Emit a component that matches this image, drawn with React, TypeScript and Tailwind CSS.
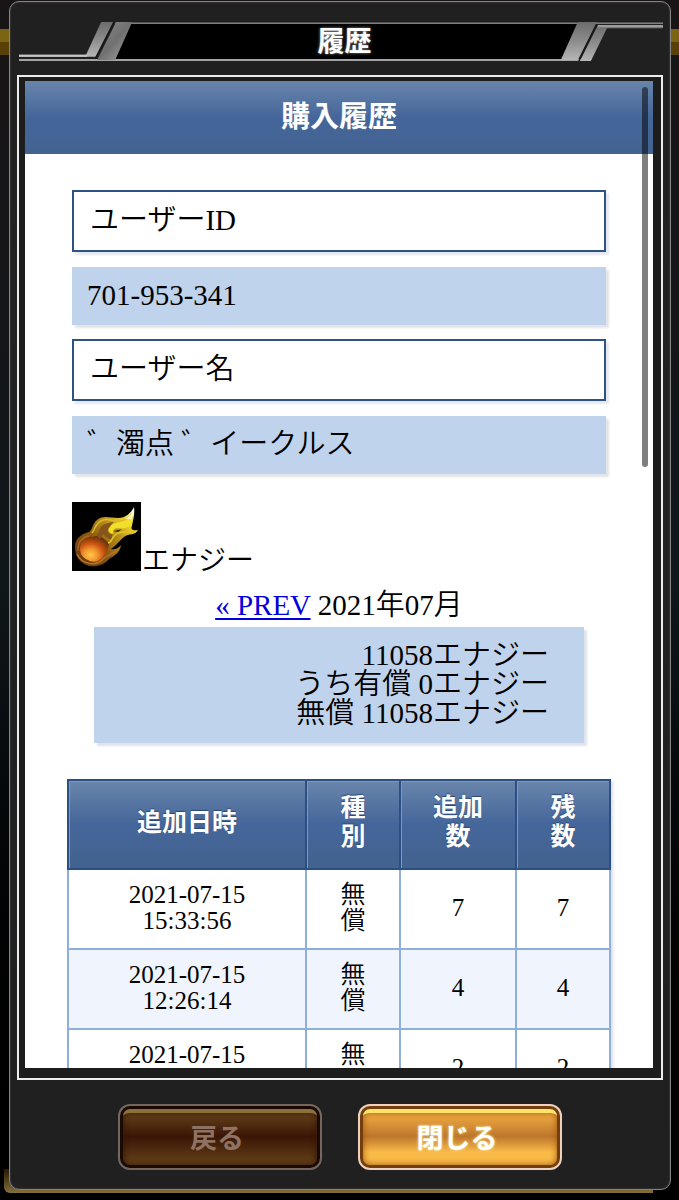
import React from "react";

type Row = { date: string; time: string; kind: string; added: number; left: number };

const rows: Row[] = [
  { date: "2021-07-15", time: "15:33:56", kind: "無償", added: 7, left: 7 },
  { date: "2021-07-15", time: "12:26:14", kind: "無償", added: 4, left: 4 },
  { date: "2021-07-15", time: "\u00a0", kind: "無償", added: 2, left: 2 },
];

const fields = [
  { label: "ユーザーID", value: "701-953-341" },
  { label: "ユーザー名", value: "゛濁点 ゛イークルス" },
];

function TitleBar() {
  return (
    <header className="mr-[7px] ml-[9px] mt-5 grid h-[39px]">
      <svg
        className="col-start-1 row-start-1 h-full w-full"
        viewBox="0 0 643 39"
        preserveAspectRatio="none"
        aria-hidden="true"
      >
        <defs>
          <linearGradient id="metal" x1="0" y1="0" x2="0" y2="1">
            <stop offset="0" stopColor="#6c6c6c" />
            <stop offset="0.5" stopColor="#8c8c8c" />
            <stop offset="1" stopColor="#b5b5b5" />
          </linearGradient>
          <linearGradient id="metalEdge" x1="0" y1="0" x2="1" y2="1">
            <stop offset="0" stopColor="#8d8d8d" />
            <stop offset="0.5" stopColor="#707070" />
            <stop offset="1" stopColor="#a8a8a8" />
          </linearGradient>
        </defs>
        <path d="M112 1H558L541 37H95Z" fill="#000" />
        <path d="M96 0.5H643V2H96Z" fill="#808080" />
        <path d="M0 36H570V38H0Z" fill="#a3a3a3" />
        <path d="M0 32H67L82 0H94L77 34H0Z" fill="url(#metal)" />
        <path d="M0 32H68V34H0Z" fill="#c6c6c6" />
        <path d="M97 0H113L96 37H78Z" fill="url(#metalEdge)" />
        <path d="M557 2L559 0H577L558 37H541Z" fill="url(#metal)" />
        <path d="M578 3H643V6H587L571 38H560Z" fill="url(#metal)" />
        <path d="M578 3H643V5H578Z" fill="#9c9c9c" />
        <path d="M95 0L76 36M577 2L559 38" stroke="#181818" strokeWidth="1.5" fill="none" />
      </svg>
      <h1 className="z-10 col-start-1 row-start-1 self-center pt-px pl-[7px] text-center text-[27px] leading-[39px] font-bold text-white [text-shadow:0_0_3px_#999]">
        履歴
      </h1>
    </header>
  );
}

function Fireball() {
  return (
    <svg className="h-[69px] w-[69px] shrink-0 bg-black" viewBox="0 0 69 69" role="img" aria-label="エナジー">
      <defs>
        <linearGradient id="flame" x1="0.05" y1="0.85" x2="0.95" y2="0.1">
          <stop offset="0" stopColor="#6b380c" />
          <stop offset="0.35" stopColor="#8f5c12" />
          <stop offset="0.62" stopColor="#b98f1b" />
          <stop offset="0.85" stopColor="#f0d92b" />
          <stop offset="1" stopColor="#fffce0" />
        </linearGradient>
        <radialGradient id="core" cx="0.36" cy="0.74" r="0.75">
          <stop offset="0" stopColor="#ffc648" />
          <stop offset="0.3" stopColor="#f39a30" />
          <stop offset="0.6" stopColor="#cf5512" />
          <stop offset="1" stopColor="#6a3208" />
        </radialGradient>
        <filter id="soft">
          <feGaussianBlur stdDeviation="0.7" />
        </filter>
      </defs>
      <g filter="url(#soft)">
        <path
          d="M3 47C2 38 8 32 17 30C21 27 20 22 25 18C31 13 38 16 46 16C54 16 59 11 62 5C63 12 61 18 60 24C58 28 62 29 66 28C63 34 57 31 52 35C47 39 45 43 39 47C43 48 47 46 49 43C48 51 42 54 37 57C32 63 25 65 17 64C9 62 4 56 3 47Z"
          fill="url(#flame)"
        />
        <path d="M8 47C8 39 14 34 20 35C28 32 33 37 37 42C36 50 32 54 29 57C24 61 19 60 16 58C11 56 8 52 8 47Z" fill="url(#core)" />
        <path d="M6 49C5 40 11 35 17 34" fill="none" stroke="#a86b22" strokeWidth="1.3" />
        <path d="M5 52C10 63 25 65 32 56C37 52 42 52 46 47" fill="none" stroke="#b4742c" strokeWidth="1.6" />
        <path d="M20 31C24 26 23 21 31 18C37 16 42 20 48 19C54 18 58 15 60 11" fill="none" stroke="#d9bd2c" strokeWidth="1.5" />
        <path d="M26 35C32 31 27 26 35 24C31 29 34 34 40 35" fill="none" stroke="#85551a" strokeWidth="5" />
        <path d="M38 25C42 18 54 22 61 14C61 24 54 28 45 26C41 27 40 30 42 32C37 32 35 28 38 25Z" fill="#f2df2c" />
        <path d="M36 41C40 41 40 33 46 31C51 29 55 32 62 29" fill="none" stroke="#dcc426" strokeWidth="1.6" />
        <path d="M53 17C58 15 60 11 62 6L60 17Z" fill="#fff8cf" />
        <path d="M42 29L50 27L46 30Z" fill="#3b2504" />
      </g>
    </svg>
  );
}

function HistoryTable() {
  const head =
    "border-2 border-[#2c4f83] bg-linear-to-b from-[#6985ab] via-[#45669a] via-50% to-[#42638f] px-[29px] pt-3 pb-[17px] text-[25px] leading-[29px] font-bold text-white shadow-[inset_1px_1px_0_#7e99bd] [text-shadow:0_-1px_1px_#2b4977]";
  const cell = "border-2 border-[#8eaedb] px-[29px] pt-3 pb-[14px] text-center text-[25px] leading-[26px]";
  return (
    <table className="w-full table-fixed border-collapse shadow-[2px_2px_3px_#d8dde6]">
      <thead>
        <tr>
          <th scope="col" className={head}>追加日時</th>
          <th scope="col" className={`${head} w-[94px]`}>種別</th>
          <th scope="col" className={`${head} w-[116px]`}>追加数</th>
          <th scope="col" className={`${head} w-[94px]`}>残数</th>
        </tr>
      </thead>
      <tbody>
        {rows.map((row, i) => (
          <tr key={i} className="odd:bg-white even:bg-[#f0f4fc]">
            <td className={cell}>
              {row.date}
              <br />
              {row.time}
            </td>
            <td className={cell}>{row.kind}</td>
            <td className={cell}>{row.added}</td>
            <td className={cell}>{row.left}</td>
          </tr>
        ))}
      </tbody>
    </table>
  );
}

export default function App() {
  return (
    <div className="relative flex h-screen flex-col overflow-hidden bg-linear-to-b from-[#191516] via-[#0f161a] to-black pt-px pr-2 pb-[10px] pl-[9px] font-['Liberation_Sans','Noto_Sans_CJK_JP',sans-serif]">
      <div
        className="absolute inset-x-0 top-[29px] h-[26px] bg-linear-to-b from-[#7c6512] from-50% to-[#594006] to-50%"
        aria-hidden="true"
      />
      <div
        className="absolute right-[26px] bottom-[7px] left-1 h-6 rounded-bl-md bg-linear-to-b from-[#2a1a05] to-[#84703a]"
        aria-hidden="true"
      />
      <div className="absolute inset-x-0 bottom-0 h-[7px] bg-black" aria-hidden="true" />

      <main className="relative flex min-h-0 flex-1 flex-col rounded-[10px] border border-[#858585] bg-[#202020] shadow-[inset_0_0_2px_#555]">
        <TitleBar />

        <div className="relative mx-[7px] mt-[14px] flex min-h-0 flex-1 flex-col border-2 border-[#ececec] bg-[#1d1d1d] pt-1 pr-2 pb-[10px] pl-[6px]">
          <section
            className="min-h-0 flex-1 overflow-y-auto bg-white font-['Liberation_Serif','Noto_Sans_CJK_JP',serif] font-[350] text-black [scrollbar-width:none]"
            tabIndex={0}
            aria-labelledby="history-title"
          >
            <h2
              id="history-title"
              className="bg-linear-to-b from-[#6985ab] via-[#45669a] via-50% to-[#426391] pt-[18px] pb-[19px] text-center text-[29px] leading-9 font-bold text-white"
            >
              購入履歴
            </h2>

            <dl className="px-[47px] pt-[36px] text-[29px]">
              {fields.map((f) => (
                <div key={f.label} className="mb-[14px]">
                  <dt className="border-2 border-[#2f5286] px-4 pt-[14px] pb-[15px] leading-[29px] shadow-[3px_3px_2px_#e4e8f0]">
                    {f.label}
                  </dt>
                  <dd className="mt-[15px] bg-[#c0d3ec] px-[15px] pt-[14px] pb-[15px] leading-[29px] shadow-[3px_3px_2px_#e4e4e6]">
                    {f.value}
                  </dd>
                </div>
              ))}
            </dl>

            <div className="flex items-end px-[47px] pt-[14px]">
              <Fireball />
              <h3 className="pl-px text-[28px] leading-[21px]">エナジー</h3>
            </div>

            <p className="mt-5 text-center text-[29px] leading-[29px]">
              <a href="#prev" className="text-[#0000dd] underline decoration-2 underline-offset-3">
                « PREV
              </a>{" "}
              2021年07月
            </p>

            <div className="mx-[69px] mt-[7px] bg-[#c0d3ec] pt-[14px] pr-[35px] pb-[15px] text-right text-[29px] leading-[29px] shadow-[3px_3px_2px_#dfe3ea]">
              <p>11058エナジー</p>
              <p>うち有償 0エナジー</p>
              <p>無償 11058エナジー</p>
            </div>

            <div className="mx-[42px] mt-9">
              <HistoryTable />
            </div>
          </section>
          <div
            className="absolute top-[10px] right-[13px] h-[38%] w-[6px] rounded-full bg-black/50"
            aria-hidden="true"
          />
        </div>

        <footer className="mt-6 mb-[19px] flex justify-center gap-9 text-[27px] font-bold">
          <button
            type="button"
            disabled
            className="flex h-[66px] w-[204px] rounded-[12px] border-2 border-[#75675f] bg-[#180a02] p-[3px] text-[#8f7262]"
          >
            <span className="flex h-full w-full items-center justify-center rounded-[7px] border-t-4 border-[#8c713f] bg-linear-to-b from-[#65431b] via-[#3a1506] via-45% to-[#66431a] pr-[6px] shadow-[inset_0_0_6px_#341405]">
              戻る
            </span>
          </button>
          <button
            type="button"
            className="flex h-[66px] w-[204px] rounded-[12px] border-2 border-[#edd3bd] bg-[#753d0d] p-[3px] text-white"
          >
            <span className="flex h-full w-full items-center justify-center rounded-[7px] border-t-4 border-[#ffe36b] bg-linear-to-b from-[#f3ae43] via-[#bd762b] via-45% to-[#f9ba48] to-75% pr-[6px] shadow-[inset_0_0_6px_#97540e] [text-shadow:0_0_3px_#fff0a0]">
              閉じる
            </span>
          </button>
        </footer>
      </main>
    </div>
  );
}
